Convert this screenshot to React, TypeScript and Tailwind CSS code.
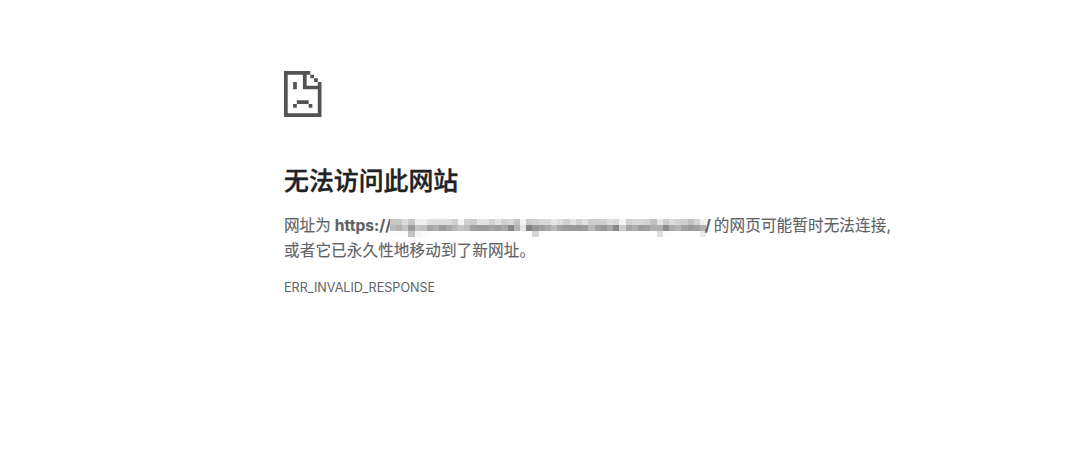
// Grey level of every redaction block, one string of hex bytes per row
const mosaicRows = [
  "c6 c8 dd c4 f0 ee e0 dc dc dc d0 f6 d0 cc e2 e2 d0 e0 d0 d8 c4 f2 c8 d0 d8 d8 e6 dc d0 e0 d0 e0 ce ce d0 dd d8 f4 d0 d8 d8 d4 c0 e4 cc dc d4 d0 c0 d4 f0",
  "bc b0 c4 9c c4 c0 a4 b0 9c a8 b8 c4 bc a0 9c 9c a4 9c a8 88 b4 e4 82 98 a0 a8 b8 a4 9a 9a 9a 9c b8 a0 98 a8 88 cc a4 b0 9c a0 b0 b0 8c ac b4 a0 9c a0 b0",
  "fd fe fc c2 f6 fb fe fe fe fe fe fe fe fe fe fe fe fe fe fe fe fe fe d8 fc fe fe fe fe fe fe fe fe fe fe fe fe fe fe fe fe fe fe e0 fc fe fe fe fe fe ea",
];

function SadPageIcon() {
  return (
    <svg
      className="block h-[46px] w-[37.5px]"
      viewBox="24 21 111 138"
      preserveAspectRatio="none"
      fill="#535353"
      aria-hidden="true"
    >
      <path fillRule="evenodd" d="M24 21H102V32H113V43H124V54H135V159H24ZM35 32V148H124V76H80V32ZM91 32V65H124V54H113V43H102V32Z" />
      <path d="M51 54H62V76H51ZM62 109H97V120H62ZM51 120H62V131H51ZM97 120H108V131H97Z" />
    </svg>
  );
}

function RedactedHost() {
  return (
    <span className="mt-[6px] flex h-[18px] w-[316px] shrink-0 flex-col">
      {mosaicRows.map((row, y) => (
        <span key={y} className="flex h-[6px]">
          {row.split(" ").map((level, x) => (
            <span key={x} className="flex-1" style={{ backgroundColor: `#${level.repeat(3)}` }} />
          ))}
        </span>
      ))}
    </span>
  );
}

export default function App() {
  return (
    <main
      lang="zh-CN"
      className="min-h-[472px] bg-white pt-[71px] pl-[284px] font-[Inter,'Noto_Sans_CJK_SC',sans-serif] text-[#5f6368]"
    >
      <SadPageIcon />
      <h1 className="mt-[46px] text-[24.9px] leading-[36px] font-medium text-[#202124] [-webkit-text-stroke:0.4px_#202124]">
        无法访问此网站
      </h1>
      <div className="mt-[14px] text-[15.6px] whitespace-nowrap [-webkit-text-stroke:0.15px_#5f6368]">
        <p className="flex h-[25px] items-center leading-[25px]">
          <span>网址为</span>
          <strong className="ml-[4px] flex w-[376px] font-bold">
            <span className="w-[55px] shrink-0">https://</span>
            <RedactedHost />
            <span className="-ml-px">/</span>
          </strong>
          <span className="ml-[3px] tracking-[0.1px]">的网页可能暂时无法连接,</span>
        </p>
        <p className="h-[25px] leading-[25px] tracking-[0.1px]">或者它已永久性地移动到了新网址。</p>
      </div>
      <div className="mt-[15px] text-[12.6px] leading-[20px]">ERR_INVALID_RESPONSE</div>
    </main>
  );
}
